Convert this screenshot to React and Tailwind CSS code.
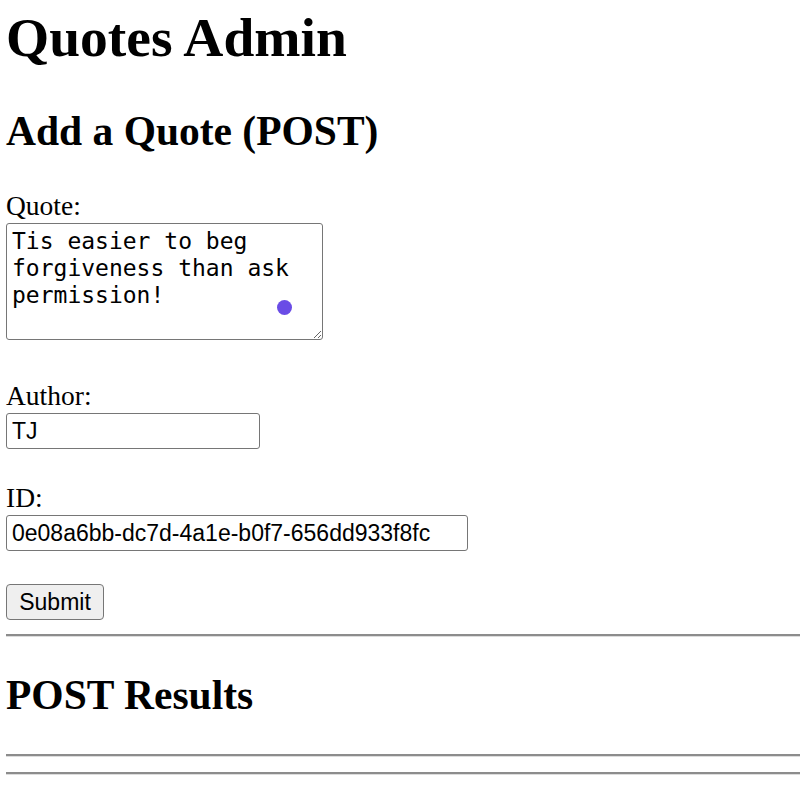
import React from 'react';

const serif = "font-['Liberation_Serif','Times_New_Roman',serif]";
const sans = "font-['Liberation_Sans',Arial,sans-serif]";

const Rule = ({ className = '' }) => (
    <div className={`h-[3px] border-t-2 border-b border-t-[#8c8c8c] border-b-[#dcdcdc] ${className}`} />
);

const App = () => {
    return (
        <div className={`min-h-[797px] bg-white pt-[6px] pl-[6px] text-black ${serif}`}>
            <h1 className="text-[55.5px] leading-[64px] font-bold">Quotes Admin</h1>
            <h2 className="mt-[37px] text-[41.5px] leading-[48px] font-bold">Add a Quote (POST)</h2>

            <form onSubmit={(e) => e.preventDefault()}>
                <label className="mt-[35px] block text-[27.5px] leading-[32px]">Quote:</label>
                <div className="relative mt-[1px] w-[317px]">
                    <textarea
                        defaultValue="Tis easier to beg forgiveness than ask permission!"
                        className="block h-[117px] w-[317px] rounded-[3px] border border-[#767676] pl-[5px] pr-[4px] pt-[4px] pb-[3px] text-[23px] leading-[27px] font-['DejaVu_Sans_Mono',monospace] resize"
                    />
                    {/* extension badge over the textarea */}
                    <span className="absolute left-[271px] top-[77px] h-[15px] w-[15px] rounded-full bg-[#6a4ce6]" />
                </div>

                <label className="mt-[40px] block text-[27.5px] leading-[32px]">Author:</label>
                <input
                    type="text"
                    defaultValue="TJ"
                    className={`mt-[1px] block h-[36px] w-[254px] rounded-[3px] border border-[#767676] px-[5px] text-[23px] ${sans}`}
                />

                <label className="mt-[33px] block text-[27.5px] leading-[32px]">ID:</label>
                <input
                    type="text"
                    defaultValue="0e08a6bb-dc7d-4a1e-b0f7-656dd933f8fc"
                    className={`mt-[1px] block h-[36px] w-[462px] rounded-[3px] border border-[#767676] px-[5px] text-[23px] ${sans}`}
                />

                <button
                    type="submit"
                    className={`mt-[33px] block h-[36px] w-[98px] rounded-[4px] border border-[#767676] bg-[#efefef] text-[23px] ${sans}`}
                >
                    Submit
                </button>
            </form>

            <Rule className="mt-[14px]" />
            <h2 className="mt-[34px] text-[41.5px] leading-[48px] font-bold">POST Results</h2>
            <Rule className="mt-[35px]" />
            <Rule className="mt-[15px]" />
        </div>
    );
};

export default App;
